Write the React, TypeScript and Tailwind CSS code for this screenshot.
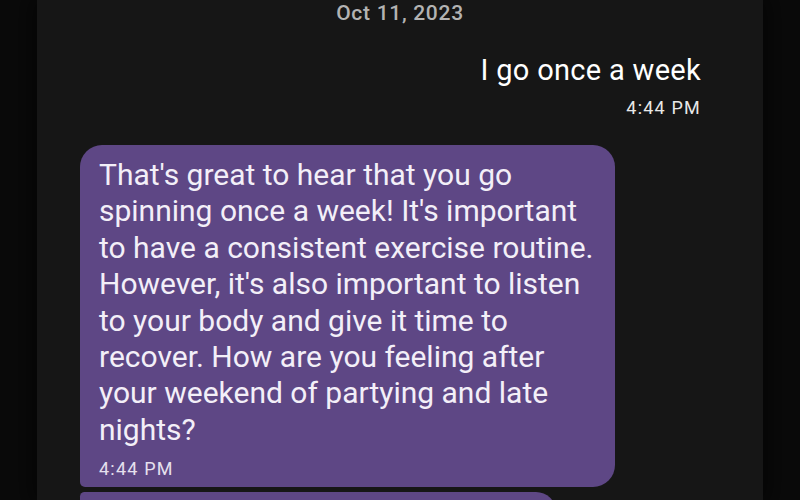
const lines = [
  "That's great to hear that you go",
  "spinning once a week! It's important",
  "to have a consistent exercise routine.",
  "However, it's also important to listen",
  "to your body and give it time to",
  "recover. How are you feeling after",
  "your weekend of partying and late",
  "nights?",
];

export default function App() {
  const font = { fontFamily: "Roboto, 'Noto Sans', sans-serif" };
  return (
    <div
      className="w-[800px] h-[500px] overflow-hidden bg-[#0a0a0a] flex justify-center"
      style={font}
    >
      <div className="w-[726px] h-full bg-[#161616] shadow-[0_0_24px_8px_rgba(0,0,0,0.5)] flex flex-col">
        <div className="pt-[3px] text-center text-[21px] leading-[20px] font-medium tracking-[0.7px] text-[#b3b3b3]">
          Oct 11, 2023
        </div>

        <div className="flex flex-col items-end pr-[62px] mt-[30px]">
          <div className="text-[29px] leading-[34px] tracking-[0.3px] text-white">
            I go once a week
          </div>
          <div className="mt-[11px] text-[18px] leading-[20px] tracking-[1.2px] text-[#e8e8e8]">
            4:44 PM
          </div>
        </div>

        <div className="pl-[43px] mt-[27px] flex flex-col gap-[5px]">
          <div className="w-[535px] bg-[#5e4785] rounded-[22px] rounded-bl-[5px] pl-[19px] pr-[12px] pt-[12px] pb-[8px]">
            <p className="text-[30px] leading-[36.4px] text-[#f3eff8]">
              {lines.map((l) => (
                <span key={l} className="block whitespace-nowrap">
                  {l}
                </span>
              ))}
            </p>
            <div className="mt-[11px] text-[18px] leading-[20px] tracking-[1.2px] text-[#e6e0ee]">
              4:44 PM
            </div>
          </div>
          <div className="w-[476px] h-[40px] bg-[#5e4785] rounded-[22px] rounded-tl-[5px]" />
        </div>
      </div>
    </div>
  );
}
